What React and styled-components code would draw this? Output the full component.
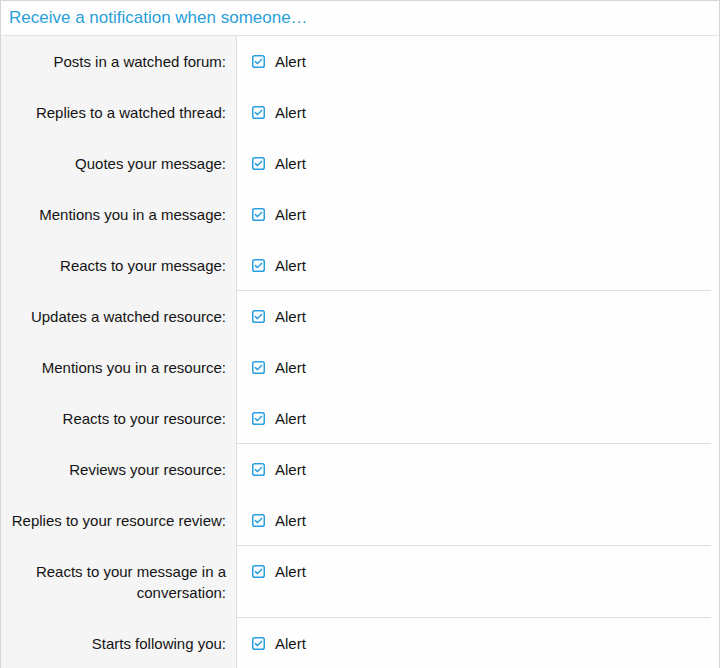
import React from "react";
import styled, { createGlobalStyle } from "styled-components";

const Global = createGlobalStyle`
  html, body { margin: 0; padding: 0; background: #ffffff; }
  * { box-sizing: border-box; }
  body { font-family: "Liberation Sans", Arial, Helvetica, sans-serif; }
`;

const Block = styled.div`
  width: 720px;
  border: 1px solid #d6d6d6;
  background: #fefefe;
`;

const Header = styled.h2`
  margin: 0;
  padding: 7px 8px;
  font-size: 17px;
  line-height: 20px;
  font-weight: 400;
  color: #2a9fd9;
  border-bottom: 1px solid #e2e2e2;
`;

const Row = styled.div`
  display: grid;
  grid-template-columns: 236px 1fr;
`;

const Label = styled.div`
  background: #f5f5f5;
  border-right: 1px solid #dddddd;
  padding: 15px 10px;
  text-align: right;
  font-size: 15px;
  line-height: 21px;
  color: #141414;
`;

const Field = styled.div`
  padding: 15px 0 ${(p) => (p.$sep ? "14px" : "15px")} 15px;
  margin-right: 8px;
  border-bottom: ${(p) => (p.$sep ? "1px solid #dedede" : "none")};
`;

const Check = styled.label`
  display: flex;
  align-items: center;
  gap: 10px;
  height: 21px;
  font-size: 15px;
  color: #141414;
`;

const Box = styled.svg`
  flex: none;
  display: block;
`;

const CheckIcon = () => (
  <Box width="13" height="13" viewBox="0 0 13 13">
    <rect x="0.75" y="0.75" width="11.5" height="11.5" rx="1.8" fill="#ffffff" stroke="#2a9fdf" strokeWidth="1.5" />
    <path d="M3.4 6.6 L5.5 8.6 L9.6 4.4" fill="none" stroke="#2a9fdf" strokeWidth="1.5" strokeLinecap="round" strokeLinejoin="round" />
  </Box>
);

const rows = [
  { label: "Posts in a watched forum:" },
  { label: "Replies to a watched thread:" },
  { label: "Quotes your message:" },
  { label: "Mentions you in a message:" },
  { label: "Reacts to your message:", sep: true },
  { label: "Updates a watched resource:" },
  { label: "Mentions you in a resource:" },
  { label: "Reacts to your resource:", sep: true },
  { label: "Reviews your resource:" },
  { label: "Replies to your resource review:", sep: true },
  { label: "Reacts to your message in a conversation:", sep: true },
  { label: "Starts following you:" },
];

export default function App() {
  return (
    <>
      <Global />
      <Block>
        <Header>Receive a notification when someone…</Header>
        {rows.map((r) => (
          <Row key={r.label}>
            <Label>{r.label}</Label>
            <Field $sep={r.sep}>
              <Check>
                <CheckIcon />
                Alert
              </Check>
            </Field>
          </Row>
        ))}
      </Block>
    </>
  );
}
